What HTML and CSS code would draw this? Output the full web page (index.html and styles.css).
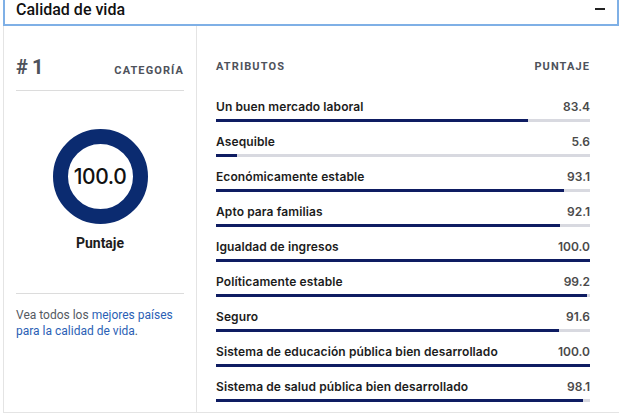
FILE: index.html
```html
<!DOCTYPE html>
<html lang="es">
<head>
<meta charset="utf-8">
<link rel="stylesheet" href="styles.css">
</head>
<body>
<div class="header">
  <span class="header-title">Calidad de vida</span>
  <span class="header-toggle"></span>
</div>
<div class="panel">
  <div class="side">
    <div class="side-top">
      <span class="rank">#&#8202;1</span>
      <span class="cap-label">CATEGORÍA</span>
    </div>
    <div class="score">
      <div class="donut"><span class="donut-value">100.0</span></div>
      <div class="score-label">Puntaje</div>
    </div>
    <p class="more">Vea todos los <a href="#">mejores países</a><br><a href="#">para la calidad de vida</a>.</p>
  </div>
  <div class="main">
    <div class="main-head">
      <span class="cap-label">ATRIBUTOS</span>
      <span class="cap-label">PUNTAJE</span>
    </div>
    <ul class="attrs">
      <li class="attr"><div class="attr-row"><span class="attr-name">Un buen mercado laboral</span><span class="attr-val">83.4</span></div><div class="bar"><div class="fill" style="width:83.4%"></div></div></li>
      <li class="attr"><div class="attr-row"><span class="attr-name">Asequible</span><span class="attr-val">5.6</span></div><div class="bar"><div class="fill" style="width:5.6%"></div></div></li>
      <li class="attr"><div class="attr-row"><span class="attr-name">Económicamente estable</span><span class="attr-val">93.1</span></div><div class="bar"><div class="fill" style="width:93.1%"></div></div></li>
      <li class="attr"><div class="attr-row"><span class="attr-name">Apto para familias</span><span class="attr-val">92.1</span></div><div class="bar"><div class="fill" style="width:92.1%"></div></div></li>
      <li class="attr"><div class="attr-row"><span class="attr-name">Igualdad de ingresos</span><span class="attr-val">100.0</span></div><div class="bar"><div class="fill" style="width:100%"></div></div></li>
      <li class="attr"><div class="attr-row"><span class="attr-name">Políticamente estable</span><span class="attr-val">99.2</span></div><div class="bar"><div class="fill" style="width:99.2%"></div></div></li>
      <li class="attr"><div class="attr-row"><span class="attr-name">Seguro</span><span class="attr-val">91.6</span></div><div class="bar"><div class="fill" style="width:91.6%"></div></div></li>
      <li class="attr"><div class="attr-row"><span class="attr-name">Sistema de educación pública bien desarrollado</span><span class="attr-val">100.0</span></div><div class="bar"><div class="fill" style="width:100%"></div></div></li>
      <li class="attr"><div class="attr-row"><span class="attr-name">Sistema de salud pública bien desarrollado</span><span class="attr-val">98.1</span></div><div class="bar"><div class="fill" style="width:98.1%"></div></div></li>
    </ul>
  </div>
</div>
</body>
</html>
```
FILE: styles.css
```css
* { box-sizing: border-box; }
body {
  margin: 0;
  background: #ffffff;
  font-family: Roboto, "Liberation Sans", sans-serif;
  width: 620px;
  height: 416px;
  overflow: hidden;
}
.header {
  margin-left: 3px;
  width: 616px;
  height: 26px;
  border: 2px solid #7fb0e6;
  border-top: none;
  display: flex;
  align-items: flex-start;
  justify-content: space-between;
  padding: 0 12px 0 11px;
}
.header-title {
  font-size: 16px;
  font-weight: 500;
  color: #111;
  line-height: 19px;
}
.header-toggle {
  width: 10px;
  height: 2px;
  background: #222;
  margin-top: 8px;
}
.panel {
  margin-left: 3px;
  width: 616px;
  height: 387px;
  display: flex;
  border-left: 1px solid #e4e4e4;
  border-bottom: 1px solid #e4e4e4;
}
.side {
  width: 193px;
  border-right: 1px solid #e4e4e4;
  padding: 0 12px 0 12px;
  display: flex;
  flex-direction: column;
}
.side-top {
  display: flex;
  justify-content: space-between;
  align-items: baseline;
  padding-top: 29px;
  height: 65px;
  border-bottom: 1px solid #dcdcdc;
}
.rank {
  font-size: 20px;
  font-weight: 700;
  color: #4e525b;
  letter-spacing: 1px;
}
.cap-label {
  font-size: 11px;
  font-weight: 700;
  color: #4e525b;
  letter-spacing: 1.1px;
}
.score {
  height: 203px;
  border-bottom: 1px solid #dcdcdc;
  display: flex;
  flex-direction: column;
  align-items: center;
  padding-top: 38px;
}
.donut {
  width: 95px;
  height: 95px;
  border-radius: 50%;
  border: 15px solid #0b2b70;
  display: flex;
  align-items: center;
  justify-content: center;
}
.donut-value {
  font-family: Inter, "Liberation Sans", sans-serif;
  font-size: 21px;
  font-weight: 500;
  color: #111;
  letter-spacing: -0.4px;
}
.score-label {
  margin-top: 11px;
  font-size: 14px;
  font-weight: 700;
  color: #1c1c1c;
}
.more {
  margin: 13px 0 0;
  font-size: 12px;
  line-height: 16px;
  color: #555a62;
}
.more a {
  color: #2b5fb5;
  text-decoration: none;
}
.main {
  flex: 1;
  padding: 0 29px 0 19px;
}
.main-head {
  display: flex;
  justify-content: space-between;
  padding-top: 34px;
  height: 73px;
}
.attrs {
  list-style: none;
  margin: 0;
  padding: 0;
}
.attr {
  height: 35px;
}
.attr-row {
  display: flex;
  justify-content: space-between;
  align-items: baseline;
  height: 16px;
  font-family: Inter, "Liberation Sans", sans-serif;
  font-size: 12px;
  font-weight: 600;
}
.attr-name {
  color: #1c1c1c;
  letter-spacing: 0.1px;
}
.attr-val {
  color: #4a4a4a;
}
.bar {
  margin-top: 4px;
  height: 3px;
  background: #d8d9e0;
}
.fill {
  height: 100%;
  background: #0e1c62;
}
```
